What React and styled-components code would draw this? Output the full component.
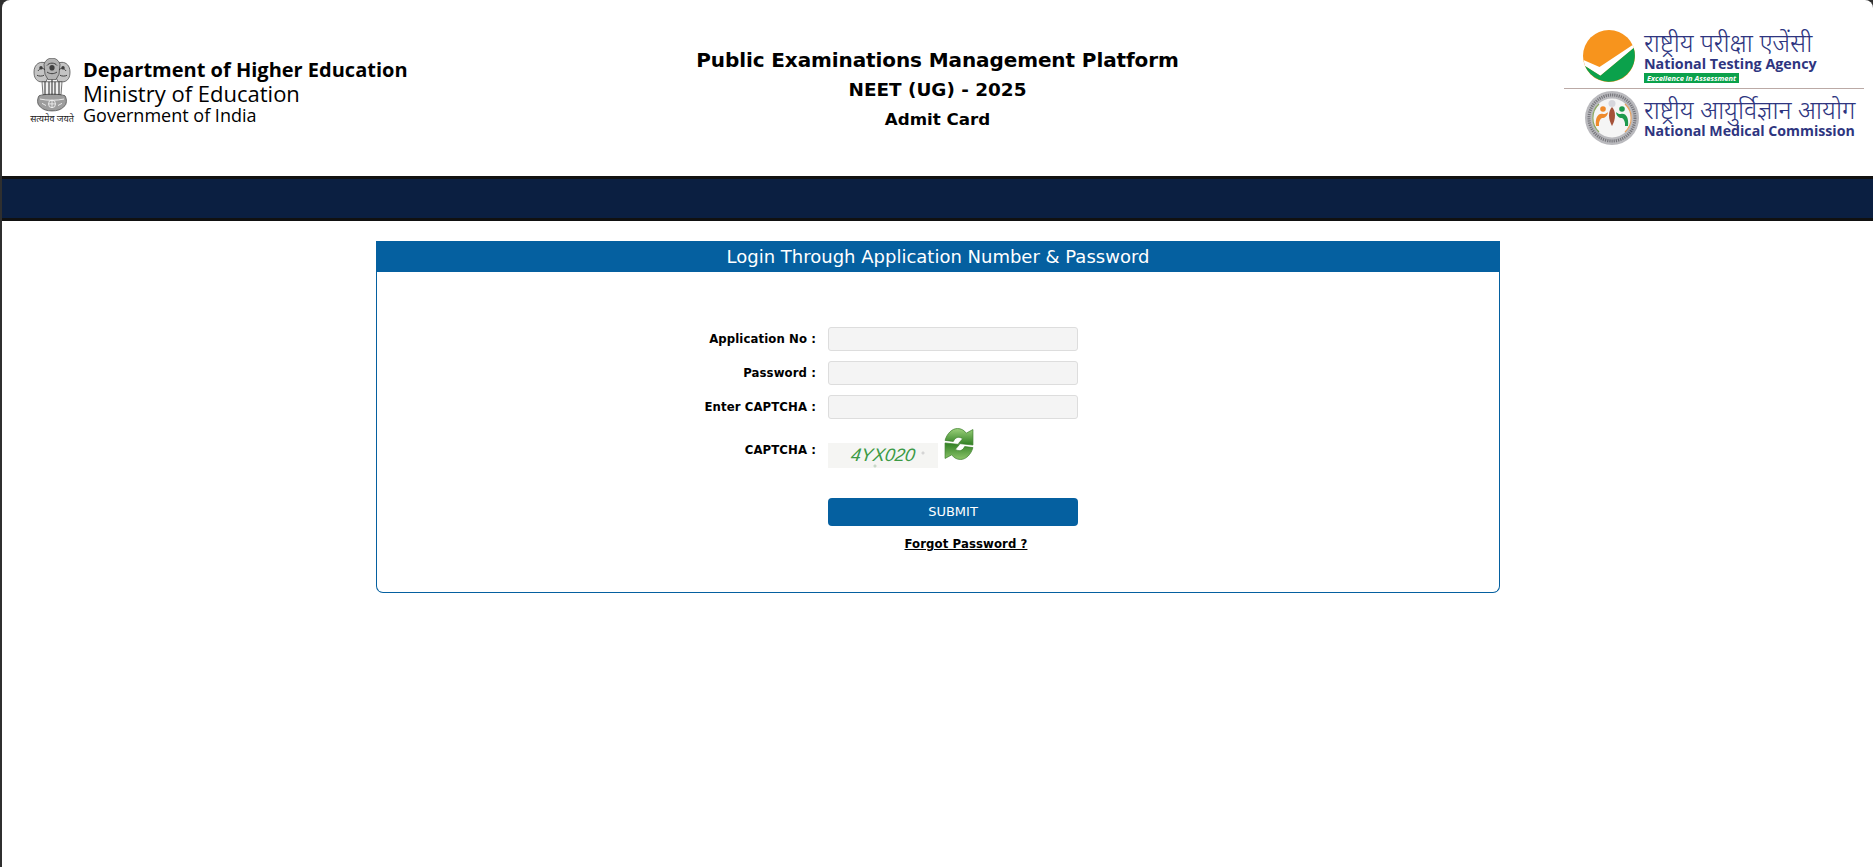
import React from "react";
import styled, { createGlobalStyle } from "styled-components";

const GlobalStyle = createGlobalStyle`
    html, body {
        margin: 0;
        padding: 0;
        background: #2f2f2f;
    }
`;

function Emblem() {
    return (
        <svg width="38" height="54" viewBox="0 0 38 50" preserveAspectRatio="none">
            <g stroke="#444" strokeWidth="0.7">
                <path d="M1 13C1 7 5 4 9 4c3 0 5 1 6 4l1 8-3 6H7C3 21 1 18 1 13z" fill="#c4c4c4" />
                <path d="M37 13c0-6-4-9-8-9-3 0-5 1-6 4l-1 8 3 6h6c4-1 6-4 6-9z" fill="#c4c4c4" />
                <path d="M11 6c1-4 5-6 8-6s7 2 8 6l-1 9-3 5h-8l-3-5z" fill="#b4b4b4" />
                <path d="M9 22h20l-1 12H10z" fill="#f1f1f1" />
                <path d="M6 35c5-2 21-2 26 0 2 3 2 8-1 10-3 3-7 4-12 4s-9-1-12-4c-3-2-3-7-1-10z" fill="#9d9d9d" />
            </g>
            <g fill="none" stroke="#3a3a3a" strokeWidth="1.1">
                <path d="M12 22v12M16 22v12M19 20v14M22 22v12M26 22v12" />
                <path d="M5 12c2-3 5-3 7-1M33 12c-2-3-5-3-7-1M14 7c2-3 8-3 10 0" strokeWidth=".9" />
                <path d="M4 16c2 1 5 1 7 0M34 16c-2 1-5 1-7 0M14 13c3 2 7 2 10 0" strokeWidth=".9" />
            </g>
            <g fill="#3f3f3f">
                <circle cx="19" cy="9" r="2.6" />
                <circle cx="8" cy="9" r="1.7" />
                <circle cx="30" cy="9" r="1.7" />
            </g>
            <g fill="none" stroke="#efefef" strokeWidth="0.9">
                <path d="M7 38c7 1.500 17 1.500 24 0" />
                <circle cx="19" cy="42.500" r="3.500" />
                <path d="M19 39v7M15.500 42.500h7M9 42l4 2M29 42l-4 2" />
            </g>
        </svg>
    );
}

function NtaMark() {
    return (
        <svg width="52" height="52" viewBox="0 0 52 52">
            <circle cx="26" cy="26" r="26" fill="#f7941d" />
            <path d="M0.500 30 L16.500 37 L49.600 15 L50.700 18 L17.400 45.800 L2 36 Z" fill="#fff" />
            <path d="M2 36 L17.400 45.800 L50.700 18 A26 26 0 0 1 2 36 Z" fill="#0ba14b" />
        </svg>
    );
}

function NmcMark() {
    return (
        <svg width="54" height="54" viewBox="0 0 54 54">
            <circle cx="27" cy="27" r="27" fill="#b9b9bd" />
            <circle cx="27" cy="27" r="23" fill="none" stroke="#77777c" strokeWidth="3" strokeDasharray="1.200 1" />
            <circle cx="27" cy="27" r="19.500" fill="#f5f5f5" />
            <path d="M14 13A19 19 0 0 0 14 41" fill="none" stroke="#8aa85f" strokeWidth="1.200" />
            <path d="M40 13A19 19 0 0 1 40 41" fill="none" stroke="#e8a15c" strokeWidth="1.200" />
            <circle cx="27" cy="12.500" r="3.500" fill="#d6d6dc" />
            <path d="M27 16c-4 4-4 12 0 19 4-7 4-15 0-19z" fill="#a5523a" />
            <circle cx="18" cy="18" r="2.800" fill="#ef8a2b" />
            <path d="M11 35c-1-8 2-13 7-12 2 .5 4-1 5-2-.5 4-3 6-6 6-2 1-3.500 4-3 8z" fill="#ef8a2b" />
            <circle cx="37" cy="18" r="2.800" fill="#1f9a4d" />
            <path d="M43 35c1-8-2-13-7-12-2 .5-4-1-5-2 .5 4 3 6 6 6 2 1 3.500 4 3 8z" fill="#1f9a4d" />
        </svg>
    );
}

function RefreshIcon() {
    const arrow = "M2 12C4 5 9 .5 14 .5c3.500 0 6.500 1.500 8.500 4.500L29 1.500V16.500L15 15l4-4.500c-3-2.500-7-2-9 2.500z";
    return (
        <svg width="32" height="32" viewBox="0 0 31 31">
            <defs>
                <linearGradient id="arrowTop" x1="0" y1="0" x2="0" y2="1">
                    <stop offset="0" stopColor="#9bd07a" />
                    <stop offset="1" stopColor="#2f7f22" />
                </linearGradient>
                <linearGradient id="arrowBottom" x1="0" y1="1" x2="0" y2="0">
                    <stop offset="0" stopColor="#2f7f22" />
                    <stop offset="1" stopColor="#8cc46a" />
                </linearGradient>
            </defs>
            <path d={arrow} fill="url(#arrowTop)" stroke="#3b7f2a" strokeWidth=".7" />
            <path d={arrow} fill="url(#arrowBottom)" stroke="#3b7f2a" strokeWidth=".7" transform="rotate(180 15.500 15.500)" />
        </svg>
    );
}

function App() {
    return (
        <Page>
            <GlobalStyle />
            <Header>
                <GovBlock>
                    <EmblemWrap>
                        <Emblem />
                        <Motto>सत्यमेव जयते</Motto>
                    </EmblemWrap>
                    <GovText>
                        <Dept>Department of Higher Education</Dept>
                        <Ministry>Ministry of Education</Ministry>
                        <Government>Government of India</Government>
                    </GovText>
                </GovBlock>
                <Titles>
                    <MainTitle>Public Examinations Management Platform</MainTitle>
                    <SubTitle>NEET (UG) - 2025</SubTitle>
                    <PageTitle>Admit Card</PageTitle>
                </Titles>
                <Logos>
                    <LogoRow $pad={19} $gap={9}>
                        <NtaMark />
                        <LogoText>
                            <HindiName>राष्ट्रीय परीक्षा एजेंसी</HindiName>
                            <EnglishName $size={14.3}>National Testing Agency</EnglishName>
                            <Tagline>Excellence in Assessment</Tagline>
                        </LogoText>
                    </LogoRow>
                    <LogoDivider />
                    <LogoRow $pad={21} $gap={5}>
                        <NmcMark />
                        <LogoText>
                            <HindiName>राष्ट्रीय आयुर्विज्ञान आयोग</HindiName>
                            <EnglishName $size={14.2}>National Medical Commission</EnglishName>
                        </LogoText>
                    </LogoRow>
                </Logos>
            </Header>
            <NavBar />
            <Panel>
                <PanelTitle>Login Through Application Number &amp; Password</PanelTitle>
                <PanelBody>
                    <FormGrid>
                        <Label>Application No :</Label>
                        <Input />
                        <Label>Password :</Label>
                        <Input type="password" />
                        <Label>Enter CAPTCHA :</Label>
                        <Input />
                        <CaptchaLabel>CAPTCHA :</CaptchaLabel>
                        <CaptchaRow>
                            <CaptchaImage>
                                <CaptchaText>4YX020</CaptchaText>
                            </CaptchaImage>
                            <RefreshButton>
                                <RefreshIcon />
                            </RefreshButton>
                        </CaptchaRow>
                        <span />
                        <SubmitCell>
                            <SubmitButton>SUBMIT</SubmitButton>
                            <ForgotLink href="#">Forgot Password ?</ForgotLink>
                        </SubmitCell>
                    </FormGrid>
                </PanelBody>
            </Panel>
        </Page>
    );
}

const Page = styled.div`
    margin-left: 2px;
    min-height: 100vh;
    background: #fff;
    border-radius: 8px 8px 0 0;
    font-family: "DejaVu Sans", Verdana, sans-serif;
    color: #000;
    overflow: hidden;
`;

const Header = styled.header`
    height: 176px;
    display: grid;
    grid-template-columns: 1fr auto 1fr;
    align-items: center;
`;

const GovBlock = styled.div`
    display: flex;
    align-items: center;
    gap: 9px;
    padding-left: 29px;
`;

const EmblemWrap = styled.div`
    display: flex;
    flex-direction: column;
    align-items: center;
    width: 44px;
    margin-top: 7px;
    margin-left: -1px;
`;

const Motto = styled.span`
    font-family: "Noto Sans", "DejaVu Sans", sans-serif;
    font-size: 9px;
    line-height: 14px;
    white-space: nowrap;
    color: #222;
`;

const GovText = styled.div`
    font-family: "Open Sans", sans-serif;
    display: flex;
    flex-direction: column;
    margin-top: 6px;
`;

const Dept = styled.div`
    font-size: 20px;
    font-weight: 700;
    line-height: 23px;
`;

const Ministry = styled.div`
    font-size: 22px;
    line-height: 24px;
`;

const Government = styled.div`
    font-size: 18px;
    line-height: 20px;
`;

const Titles = styled.div`
    display: flex;
    flex-direction: column;
    align-items: center;
    margin-top: 1px;
    font-weight: 700;
`;

const MainTitle = styled.h1`
    margin: 0;
    font-size: 20px;
    line-height: 30px;
    letter-spacing: -0.1px;
`;

const SubTitle = styled.h2`
    margin: 0;
    font-size: 18.4px;
    line-height: 30px;
`;

const PageTitle = styled.h3`
    margin: 0;
    font-size: 16.7px;
    line-height: 28px;
`;

const Logos = styled.div`
    justify-self: end;
    width: 300px;
    margin-right: 9px;
    display: flex;
    flex-direction: column;
    margin-top: -2px;
`;

const LogoRow = styled.div`
    display: flex;
    align-items: center;
    gap: ${props => props.$gap}px;
    padding-left: ${props => props.$pad}px;
`;

const LogoText = styled.div`
    display: flex;
    flex-direction: column;
    font-family: "Open Sans", sans-serif;
    color: #2e3580;
`;

const HindiName = styled.div`
    font-family: "Noto Sans", sans-serif;
    font-size: 25px;
    font-weight: 300;
    line-height: 26px;
    white-space: nowrap;
`;

const EnglishName = styled.div`
    font-size: ${props => props.$size}px;
    font-weight: 700;
    line-height: 18px;
    white-space: nowrap;
`;

const Tagline = styled.div`
    align-self: flex-start;
    background: #0ba14b;
    color: #fff;
    font-size: 7.5px;
    font-weight: 700;
    font-style: italic;
    line-height: 10px;
    padding: 0 3px;
`;

const LogoDivider = styled.div`
    height: 1px;
    background: #bbaaa6;
    margin: 5px 0 2px;
`;

const NavBar = styled.div`
    height: 39px;
    background: #0b1f41;
    border-top: 3px solid #111;
    border-bottom: 3px solid #111;
`;

const Panel = styled.section`
    width: 1124px;
    margin: 20px auto 0 374px;
`;

const PanelTitle = styled.div`
    height: 31px;
    background: #0560a0;
    color: #fff;
    font-size: 18px;
    line-height: 31px;
    text-align: center;
`;

const PanelBody = styled.div`
    height: 321px;
    box-sizing: border-box;
    padding-top: 55px;
    border: 1px solid #0560a0;
    border-top: none;
    border-radius: 0 0 7px 7px;
`;

const FormGrid = styled.div`
    display: grid;
    grid-template-columns: 439px 250px;
    column-gap: 12px;
    row-gap: 10px;
    align-items: center;
`;

const Label = styled.label`
    font-size: 13px;
    font-stretch: condensed;
    font-weight: 700;
    letter-spacing: 0.1px;
    line-height: 22px;
    text-align: right;
`;

const CaptchaLabel = styled(Label)`
    align-self: start;
    margin-top: 10px;
`;

const Input = styled.input`
    box-sizing: border-box;
    width: 250px;
    height: 24px;
    background: #f4f4f4;
    border: 1px solid #ddd;
    border-radius: 3px;
    outline: none;
`;

const CaptchaRow = styled.div`
    display: flex;
    align-items: flex-start;
    gap: 5px;
`;

const CaptchaImage = styled.div`
    width: 110px;
    height: 25px;
    margin-top: 14px;
    padding-left: 23px;
    box-sizing: border-box;
    background:
        radial-gradient(circle at 95px 10px, #d5d5d5 1px, transparent 2px),
        radial-gradient(circle at 84px 6px, #e0e0e0 1px, transparent 2px),
        radial-gradient(circle at 47px 23px, #c8d8c8 1px, transparent 2px),
        #f5f5f3;
`;

const CaptchaText = styled.span`
    display: inline-block;
    color: #3c9a45;
    font-family: "Liberation Sans", sans-serif;
    font-size: 18px;
    font-style: italic;
    line-height: 25px;
    transform: skewX(-8deg);
`;

const RefreshButton = styled.div`
    width: 32px;
    height: 32px;
    margin-top: -1px;
    cursor: pointer;
`;

const SubmitCell = styled.div`
    display: flex;
    flex-direction: column;
    align-items: center;
    margin-top: 20px;
`;

const SubmitButton = styled.button`
    width: 250px;
    height: 28px;
    padding-bottom: 3px;
    border: none;
    border-radius: 4px;
    background: #0560a0;
    color: #fff;
    font-family: "DejaVu Sans", Verdana, sans-serif;
    font-size: 13px;
    cursor: pointer;
`;

const ForgotLink = styled.a`
    margin-top: 10px;
    margin-left: 26px;
    font-size: 13px;
    font-stretch: condensed;
    font-weight: 700;
    letter-spacing: 0.1px;
    line-height: 16px;
    color: #000;
    text-decoration: underline;
`;

export default App;
